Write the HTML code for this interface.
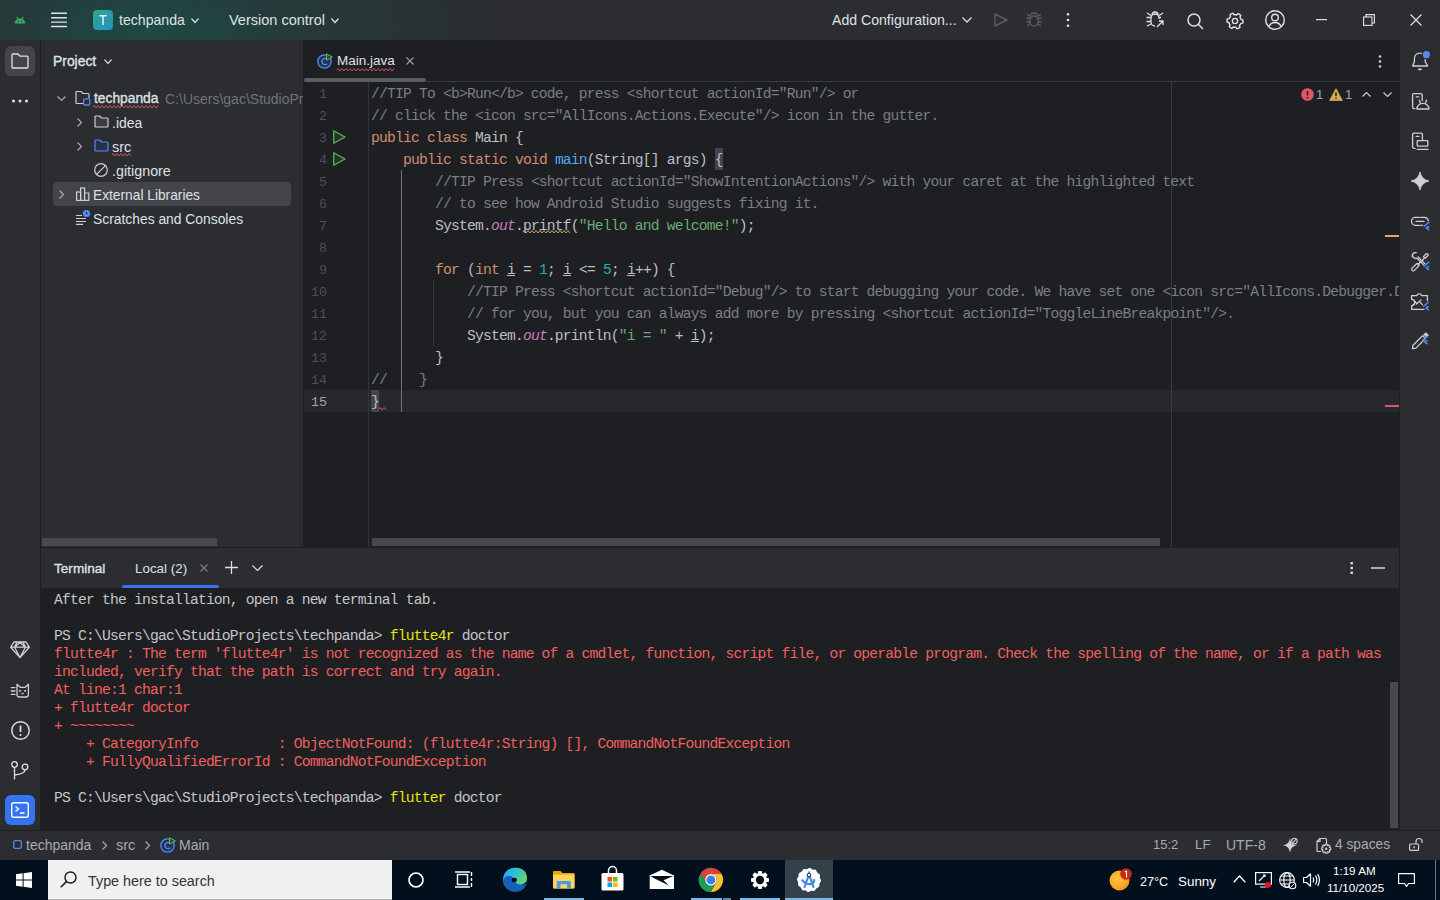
<!DOCTYPE html>
<html><head><meta charset="utf-8"><style>
*{margin:0;padding:0;box-sizing:border-box}
html,body{width:1440px;height:900px;overflow:hidden;background:#1E1F22}
body{position:relative;font-family:"Liberation Sans",sans-serif;font-size:14px;color:#DFE1E5}
.a{position:absolute}
.t{position:absolute;white-space:pre;line-height:16px}
.mono{font-family:"Liberation Mono",monospace;font-size:14.667px;letter-spacing:-0.8015px;white-space:pre}
svg.i{position:absolute;overflow:visible}
#title{left:0;top:0;width:1440px;height:40px;background:#2B2D30}
#grad{left:0;top:0;width:900px;height:40px;background:radial-gradient(ellipse 350px 160px at 150px 30px, rgba(29,74,68,1) 0%, rgba(36,62,61,0.75) 40%, rgba(43,45,48,0) 100%)}
#lstrip{left:0;top:40px;width:41px;height:790px;background:#2B2D30;border-right:1px solid #1E1F22}
#rstrip{left:1399px;top:40px;width:41px;height:790px;background:#2B2D30;border-left:1px solid #1E1F22}
#proj{left:41px;top:40px;width:262px;height:507px;background:#2B2D30}
#editor{left:303px;top:40px;width:1096px;height:507px;background:#1E1F22}
#term{left:41px;top:588px;width:1358px;height:242px;background:#1E1F22}
#termhead{left:41px;top:548px;width:1358px;height:40px;background:#2B2D30}
#status{left:0;top:830px;width:1440px;height:30px;background:#2B2D30;border-top:1px solid #1E1F22}
#taskbar{left:0;top:860px;width:1440px;height:40px;background:#02101D}
.code{position:absolute;left:371px;top:83px;line-height:22px;color:#BCBEC4}
.ln{position:absolute;left:297px;width:30px;text-align:right;top:84px;line-height:22px;color:#4B5059;font-size:13.333px!important;letter-spacing:0!important}
.c{color:#7A7E85}.k{color:#CF8E6D}.f{color:#56A8F5}.s{color:#6AAB73}.n{color:#2AACB8}.o{color:#C77DBB;font-style:italic}
.term{position:absolute;left:54px;top:591px;line-height:18px;color:#C4C6CA}
.r{color:#F0605E}.y{color:#E5E510}
</style></head><body>
<div id="title" class="a"></div>
<div id="grad" class="a"></div>
<div id="lstrip" class="a"></div>
<div id="rstrip" class="a"></div>
<div id="proj" class="a"></div>
<div id="editor" class="a"></div>
<div id="termhead" class="a"></div>
<div id="term" class="a"></div>
<div id="status" class="a"></div>
<div id="taskbar" class="a"></div>
<svg class="i" style="left:14px;top:16px" width="12" height="8" viewBox="0 0 12 8"><path d="M0.8 7.5 A5.2 5.2 0 0 1 11.2 7.5 Z" fill="#3DAA5C"/><path d="M2.8 0.8 L4.2 3.2 M9.2 0.8 L7.8 3.2" stroke="#3DAA5C" stroke-width="1.1"/><circle cx="4.2" cy="5.3" r="0.75" fill="#1f3a37"/><circle cx="7.8" cy="5.3" r="0.75" fill="#1f3a37"/></svg>
<svg class="i" style="left:51px;top:12px" width="16" height="16" viewBox="0 0 16 16"><rect x="0" y="0.6" width="16" height="1.4" rx="0.5" fill="#DFE1E5"/><rect x="0" y="5.0" width="16" height="1.4" rx="0.5" fill="#DFE1E5"/><rect x="0" y="9.4" width="16" height="1.4" rx="0.5" fill="#DFE1E5"/><rect x="0" y="13.8" width="16" height="1.4" rx="0.5" fill="#DFE1E5"/></svg>
<div class="a" style="left:93px;top:10px;width:20px;height:20px;border-radius:4px;background:linear-gradient(135deg,#2FA58A,#2094C4)"></div>
<svg class="i" style="left:93px;top:10px" width="20" height="20" viewBox="0 0 20 20"><path d="M6.2 5.8 H13.8 M10 5.8 V15" stroke="#E6F2F2" stroke-width="1.5" fill="none"/></svg>
<div class="t" style="left:119px;top:12px;font-size:14.1px;color:#DFE1E5;font-weight:normal;">techpanda</div>
<svg class="i" style="left:191px;top:18px" width="8" height="5" viewBox="0 0 8 5"><path d="M0.5 0.5 L4.0 4.5 L7.5 0.5" stroke="#DFE1E5" stroke-width="1.2" fill="none"/></svg>
<div class="t" style="left:229px;top:12px;font-size:14.5px;color:#DFE1E5;font-weight:normal;">Version control</div>
<svg class="i" style="left:331px;top:18px" width="8" height="5" viewBox="0 0 8 5"><path d="M0.5 0.5 L4.0 4.5 L7.5 0.5" stroke="#DFE1E5" stroke-width="1.2" fill="none"/></svg>
<div class="t" style="left:832px;top:12px;font-size:14.1px;color:#DFE1E5;font-weight:normal;">Add Configuration...</div>
<svg class="i" style="left:962px;top:17px" width="10" height="6" viewBox="0 0 10 6"><path d="M0.5 0.5 L5 5 L9.5 0.5" stroke="#DFE1E5" stroke-width="1.3" fill="none"/></svg>
<svg class="i" style="left:994px;top:13px" width="14" height="14" viewBox="0 0 14 14"><path d="M1 1 L13 7 L1 13 Z" stroke="#5B5E64" stroke-width="1.4" fill="none" stroke-linejoin="round"/></svg>
<svg class="i" style="left:1026px;top:12px" width="16" height="15" viewBox="0 0 16 15"><g stroke="#5B5E64" stroke-width="1.3" fill="none"><path d="M4.5 4 Q4.5 1 8 1 Q11.5 1 11.5 4"/><rect x="4" y="4" width="8" height="10" rx="4"/><path d="M0.5 6 H4 M12 6 H15.5 M0.5 10 H4 M12 10 H15.5 M1 14 L4 12 M15 14 L12 12 M1 2 L4 4.5 M15 2 L12 4.5"/></g></svg>
<svg class="i" style="left:1066px;top:13px" width="4" height="14" viewBox="0 0 4 14"><circle cx="2" cy="1.3" r="1.3" fill="#DFE1E5"/><circle cx="2" cy="7" r="1.3" fill="#DFE1E5"/><circle cx="2" cy="12.7" r="1.3" fill="#DFE1E5"/></svg>
<svg class="i" style="left:1146px;top:11px" width="19" height="17" viewBox="0 0 19 17"><g stroke="#DFE1E5" stroke-width="1.3" fill="none"><path d="M6 4 Q6 1 9 1 Q12 1 12 4"/><path d="M13 8 V7 A4 4 0 0 0 5 7 V11 A4 4 0 0 0 9 15"/><path d="M0.5 6.5 H5 M0.5 10.5 H5 M1 15 L5 13 M1 2 L5 4.5 M13 4.5 L17 2 M13 6.5 H15"/><path d="M11 16 L17 10 M13 10 H17 V14"/></g></svg>
<svg class="i" style="left:1187px;top:13px" width="17" height="16" viewBox="0 0 17 16"><g stroke="#DFE1E5" stroke-width="1.5" fill="none"><circle cx="7" cy="7" r="6"/><path d="M11.3 11.3 L16 16"/></g></svg>
<svg class="i" style="left:1226px;top:12px" width="18" height="18" viewBox="0 0 18 18"><g stroke="#DFE1E5" stroke-width="1.4" fill="none"><circle cx="9" cy="9" r="2.6"/><path d="M17.00 9.00 L16.93 10.04 L16.73 11.07 L14.82 11.41 L14.46 12.15 L14.00 12.84 L13.45 13.45 L13.87 15.35 L13.00 15.93 L12.06 16.39 L11.07 16.73 L9.82 15.25 L9.00 15.30 L8.18 15.25 L7.37 15.09 L5.94 16.39 L5.00 15.93 L4.13 15.35 L3.34 14.66 L4.00 12.84 L3.54 12.15 L3.18 11.41 L2.91 10.63 L1.07 10.04 L1.00 9.00 L1.07 7.96 L1.27 6.93 L3.18 6.59 L3.54 5.85 L4.00 5.16 L4.55 4.55 L4.13 2.65 L5.00 2.07 L5.94 1.61 L6.93 1.27 L8.18 2.75 L9.00 2.70 L9.82 2.75 L10.63 2.91 L12.06 1.61 L13.00 2.07 L13.87 2.65 L14.66 3.34 L14.00 5.16 L14.46 5.85 L14.82 6.59 L15.09 7.37 L16.93 7.96 Z"/></g></svg>
<svg class="i" style="left:1265px;top:10px" width="20" height="20" viewBox="0 0 20 20"><g stroke="#DFE1E5" stroke-width="1.4" fill="none"><circle cx="10" cy="10" r="9.3"/><circle cx="10" cy="7.5" r="3.3"/><path d="M4 16.5 Q5.5 12.5 10 12.5 Q14.5 12.5 16 16.5"/></g></svg>
<svg class="i" style="left:1316px;top:19px" width="11" height="2" viewBox="0 0 11 2"><rect x="0" y="0" width="11" height="1.2" fill="#DFE1E5"/></svg>
<svg class="i" style="left:1363px;top:14px" width="12" height="12" viewBox="0 0 12 12"><g stroke="#DFE1E5" stroke-width="1.1" fill="none"><rect x="0.6" y="3" width="8.4" height="8.4"/><path d="M3 3 V0.6 H11.4 V9 H9"/></g></svg>
<svg class="i" style="left:1410px;top:14px" width="12" height="12" viewBox="0 0 12 12"><path d="M0.5 0.5 L11.5 11.5 M11.5 0.5 L0.5 11.5" stroke="#DFE1E5" stroke-width="1.2"/></svg>
<div class="a" style="left:5px;top:46px;width:30px;height:30px;border-radius:6px;background:#43454A"></div>
<svg class="i" style="left:11px;top:53px" width="18" height="16" viewBox="0 0 18 16"><path d="M1 2 Q1 1 2 1 H7 L9 3.2 H16 Q17 3.2 17 4.2 V14 Q17 15 16 15 H2 Q1 15 1 14 Z" stroke="#DFE1E5" stroke-width="1.3" fill="none" stroke-linejoin="round"/></svg>
<svg class="i" style="left:12px;top:99px" width="16" height="4" viewBox="0 0 16 4"><circle cx="1.5" cy="2" r="1.5" fill="#DFE1E5"/><circle cx="8" cy="2" r="1.5" fill="#DFE1E5"/><circle cx="14.5" cy="2" r="1.5" fill="#DFE1E5"/></svg>
<svg class="i" style="left:0px;top:630px" width="40" height="80" viewBox="0 630 40 80"><g stroke="#CED0D6" stroke-width="1.3" fill="none" stroke-linejoin="round" stroke-linecap="round"><path d="M14 642 H26 L29.3 647.2 L20 657.6 L10.7 647.2 Z M10.7 647.2 H29.3 M14.6 647.2 L17 642 M25.4 647.2 L23 642 M14.6 647.2 L20 642.3 L25.4 647.2 M14.6 647.2 L20 657.6 L25.4 647.2"/></g><g stroke="#CED0D6" stroke-width="1.3" fill="none" stroke-linejoin="round" stroke-linecap="round"><path d="M17 684.3 L20.3 687.3 H25.2 L28.4 684.3 V694.5 Q28.4 697 26 697 H19.4 Q17 697 17 694.5 Z"/><path d="M11.3 687.6 H15 M11.3 691 H15 M11.3 694.4 H15"/></g><rect x="19.1" y="690" width="1.7" height="1.7" fill="#CED0D6"/><rect x="24.3" y="690" width="1.7" height="1.7" fill="#CED0D6"/><path d="M21.6 693.2 H23.6 L22.6 694.4 Z" fill="#CED0D6" stroke="#CED0D6" stroke-width="0.6"/></svg>
<svg class="i" style="left:11px;top:721px" width="19" height="19" viewBox="0 0 19 19"><circle cx="9.5" cy="9.5" r="8.7" stroke="#DFE1E5" stroke-width="1.4" fill="none"/><path d="M9.5 4.5 V11" stroke="#DFE1E5" stroke-width="1.7"/><circle cx="9.5" cy="14" r="1" fill="#DFE1E5"/></svg>
<svg class="i" style="left:11px;top:761px" width="18" height="19" viewBox="0 0 18 19"><g stroke="#DFE1E5" stroke-width="1.3" fill="none"><circle cx="3.5" cy="3.5" r="2.8"/><circle cx="14" cy="6" r="2.8"/><path d="M3.5 6.3 V18.5 M14 8.8 Q14 13 3.5 14"/></g></svg>
<div class="a" style="left:5px;top:795px;width:30px;height:30px;border-radius:6px;background:#3574F0"></div>
<svg class="i" style="left:11px;top:802px" width="18" height="16" viewBox="0 0 18 16"><rect x="0.7" y="0.7" width="16.6" height="14.6" rx="2" stroke="#FFFFFF" stroke-width="1.4" fill="none"/><path d="M4.5 4.5 L7.5 7 L4.5 9.5 M9 11 H13.5" stroke="#FFFFFF" stroke-width="1.4" fill="none"/></svg>
<div class="t" style="left:53px;top:53px;font-size:13.9px;color:#DFE1E5;font-weight:normal;-webkit-text-stroke:0.35px #DFE1E5;">Project</div>
<svg class="i" style="left:104px;top:59px" width="8" height="5" viewBox="0 0 8 5"><path d="M0.5 0.5 L4.0 4.5 L7.5 0.5" stroke="#CED0D6" stroke-width="1.2" fill="none"/></svg>
<svg class="i" style="left:57px;top:96px" width="9" height="5" viewBox="0 0 9 5"><path d="M0.5 0.5 L4.5 4.5 L8.5 0.5" stroke="#A8ABB0" stroke-width="1.2" fill="none"/></svg>
<svg class="i" style="left:75px;top:90px" width="16" height="16" viewBox="0 0 16 16"><path d="M8 13.5 H2 Q1 13.5 1 12.5 V2.5 Q1 1.5 2 1.5 H6 L8 3.5 H13 Q14 3.5 14 4.5 V8" stroke="#CED0D6" stroke-width="1.2" fill="none" stroke-linejoin="round"/><rect x="8.6" y="8.8" width="6.2" height="6.2" rx="1.3" stroke="#548AF7" stroke-width="1.3" fill="#2B2D30"/></svg>
<div class="t" style="left:94px;top:91px;font-size:13.8px;color:#DFE1E5;font-weight:normal;-webkit-text-stroke:0.35px #DFE1E5;">techpanda</div>
<svg class="i" style="left:93px;top:105px" width="66" height="4"><path d="M0 2 L1 0.5 L3 3 L5 0.5 L7 3 L9 0.5 L11 3 L13 0.5 L15 3 L17 0.5 L19 3 L21 0.5 L23 3 L25 0.5 L27 3 L29 0.5 L31 3 L33 0.5 L35 3 L37 0.5 L39 3 L41 0.5 L43 3 L45 0.5 L47 3 L49 0.5 L51 3 L53 0.5 L55 3 L57 0.5 L59 3 L61 0.5 L63 3 L65 0.5" stroke="#D65D62" stroke-width="0.9" fill="none"/></svg>
<div class="t" style="left:165px;top:91px;width:138px;overflow:hidden;font-size:14px;color:#6F737A">C:\Users\gac\StudioProjects\techpanda</div>
<svg class="i" style="left:77px;top:118px" width="5" height="9" viewBox="0 0 5 9"><path d="M0.5 0.5 L4.5 4.5 L0.5 8.5" stroke="#A8ABB0" stroke-width="1.2" fill="none"/></svg>
<svg class="i" style="left:94px;top:115px" width="15" height="13" viewBox="0 0 15 13"><path d="M1 2 Q1 1 2 1 H5.5 L7.5 3 H13 Q14 3 14 4 V11 Q14 12 13 12 H2 Q1 12 1 11 Z" stroke="#CED0D6" stroke-width="1.2" fill="#3B3D41" stroke-linejoin="round"/></svg>
<div class="t" style="left:112px;top:115px;font-size:14px;color:#DFE1E5;font-weight:normal;">.idea</div>
<svg class="i" style="left:77px;top:142px" width="5" height="9" viewBox="0 0 5 9"><path d="M0.5 0.5 L4.5 4.5 L0.5 8.5" stroke="#A8ABB0" stroke-width="1.2" fill="none"/></svg>
<svg class="i" style="left:94px;top:139px" width="15" height="13" viewBox="0 0 15 13"><path d="M1 2 Q1 1 2 1 H5.5 L7.5 3 H13 Q14 3 14 4 V11 Q14 12 13 12 H2 Q1 12 1 11 Z" stroke="#548AF7" stroke-width="1.2" fill="#25324D" stroke-linejoin="round"/></svg>
<div class="t" style="left:112px;top:139px;font-size:14.5px;color:#DFE1E5;font-weight:normal;">src</div>
<svg class="i" style="left:112px;top:153px" width="20" height="4"><path d="M0 2 L1 0.5 L3 3 L5 0.5 L7 3 L9 0.5 L11 3 L13 0.5 L15 3 L17 0.5 L19 3" stroke="#D65D62" stroke-width="0.9" fill="none"/></svg>
<svg class="i" style="left:94px;top:163px" width="14" height="14" viewBox="0 0 14 14"><circle cx="7" cy="7" r="6.3" stroke="#CED0D6" stroke-width="1.2" fill="none"/><path d="M2.8 11.2 L11.2 2.8" stroke="#CED0D6" stroke-width="1.2"/></svg>
<div class="t" style="left:112px;top:163px;font-size:14.3px;color:#DFE1E5;font-weight:normal;">.gitignore</div>
<div class="a" style="left:53px;top:182px;width:238px;height:24px;border-radius:4px;background:#43454A"></div>
<svg class="i" style="left:59px;top:190px" width="5" height="9" viewBox="0 0 5 9"><path d="M0.5 0.5 L4.5 4.5 L0.5 8.5" stroke="#A8ABB0" stroke-width="1.2" fill="none"/></svg>
<svg class="i" style="left:76px;top:187px" width="14" height="14" viewBox="0 0 14 14"><g stroke="#CED0D6" stroke-width="1.2" fill="none"><rect x="0.6" y="5" width="4" height="8.4"/><rect x="4.6" y="1" width="4" height="12.4"/><path d="M8.6 6 H12.8 V13.4 H8.6"/></g></svg>
<div class="t" style="left:93px;top:187.5px;font-size:13.75px;color:#DFE1E5;font-weight:normal;">External Libraries</div>
<svg class="i" style="left:76px;top:211px" width="16" height="14" viewBox="0 0 16 14"><g stroke="#CED0D6" stroke-width="1.2"><path d="M0 4.5 H6 M0 7.5 H10 M0 10.5 H10 M0 13.4 H7"/></g><circle cx="10.5" cy="2.5" r="3.6" fill="#548AF7"/><path d="M10.5 0.8 V2.7 H11.9" stroke="#2B2D30" stroke-width="0.9" fill="none"/></svg>
<div class="t" style="left:93px;top:210.5px;font-size:13.85px;color:#DFE1E5;font-weight:normal;">Scratches and Consoles</div>
<div class="a" style="left:42px;top:538px;width:175px;height:8px;background:#48494C"></div>
<svg class="i" style="left:317px;top:53px" width="16" height="16" viewBox="0 0 16 16"><circle cx="7.5" cy="8.5" r="6.7" stroke="#548AF7" stroke-width="1.3" fill="#25324D"/><path d="M10 6.3 A3 3 0 1 0 10 10.7" stroke="#548AF7" stroke-width="1.3" fill="none"/><path d="M9.5 0.8 L15.3 4 L9.5 7.2 Z" fill="#2B4A2F" stroke="#5FB865" stroke-width="1"/></svg>
<div class="t" style="left:337px;top:53px;font-size:13.5px;color:#DFE1E5;font-weight:normal;">Main.java</div>
<svg class="i" style="left:337px;top:68px" width="58" height="4"><path d="M0 2 L1 0.5 L3 3 L5 0.5 L7 3 L9 0.5 L11 3 L13 0.5 L15 3 L17 0.5 L19 3 L21 0.5 L23 3 L25 0.5 L27 3 L29 0.5 L31 3 L33 0.5 L35 3 L37 0.5 L39 3 L41 0.5 L43 3 L45 0.5 L47 3 L49 0.5 L51 3 L53 0.5 L55 3 L57 0.5" stroke="#D65D62" stroke-width="0.9" fill="none"/></svg>
<svg class="i" style="left:406px;top:57px" width="8" height="8" viewBox="0 0 8 8"><path d="M0.5 0.5 L7.5 7.5 M7.5 0.5 L0.5 7.5" stroke="#9DA0A8" stroke-width="1.1"/></svg>
<div class="a" style="left:304px;top:81px;width:1095px;height:1px;background:#393B40"></div>
<div class="a" style="left:304px;top:78px;width:122px;height:4px;border-radius:2px;background:#5A5D63"></div>
<svg class="i" style="left:1378px;top:55px" width="4" height="13" viewBox="0 0 4 13"><circle cx="2" cy="1.5" r="1.3" fill="#CED0D6"/><circle cx="2" cy="6.5" r="1.3" fill="#CED0D6"/><circle cx="2" cy="11.5" r="1.3" fill="#CED0D6"/></svg>
<div class="a" style="left:304px;top:390px;width:1095px;height:22px;background:#26282E"></div>
<div class="a" style="left:368px;top:82px;width:1px;height:465px;background:#313438"></div>
<div class="a" style="left:1171px;top:82px;width:1px;height:465px;background:#393B40"></div>
<div class="a" style="left:401px;top:170px;width:1px;height:242px;background:#6F737A"></div>
<div class="a" style="left:433px;top:280px;width:1px;height:66px;background:#393B40"></div>
<div class="a" style="left:715px;top:148px;width:8px;height:22px;background:#43454A"></div>
<div class="a" style="left:371px;top:390px;width:8px;height:22px;background:#43454A"></div>
<div class="ln mono"><span style="color:#4B5059">1</span>
<span style="color:#4B5059">2</span>
<span style="color:#4B5059">3</span>
<span style="color:#4B5059">4</span>
<span style="color:#4B5059">5</span>
<span style="color:#4B5059">6</span>
<span style="color:#4B5059">7</span>
<span style="color:#4B5059">8</span>
<span style="color:#4B5059">9</span>
<span style="color:#4B5059">10</span>
<span style="color:#4B5059">11</span>
<span style="color:#4B5059">12</span>
<span style="color:#4B5059">13</span>
<span style="color:#4B5059">14</span>
<span style="color:#A1A3AB">15</span></div>
<svg class="i" style="left:333px;top:130px" width="13" height="14" viewBox="0 0 13 14"><path d="M0.7 0.8 L12 7 L0.7 13.2 Z" fill="#253627" stroke="#5FB865" stroke-width="1.2" stroke-linejoin="round"/></svg>
<svg class="i" style="left:333px;top:152px" width="13" height="14" viewBox="0 0 13 14"><path d="M0.7 0.8 L12 7 L0.7 13.2 Z" fill="#253627" stroke="#5FB865" stroke-width="1.2" stroke-linejoin="round"/></svg>
<div class="a" style="left:371px;top:82px;width:1028px;height:465px;overflow:hidden"><div class="code mono" style="left:0;top:1px"><span class="c">//TIP To &lt;b&gt;Run&lt;/b&gt; code, press &lt;shortcut actionId=&quot;Run&quot;/&gt; or</span>
<span class="c">// click the &lt;icon src=&quot;AllIcons.Actions.Execute&quot;/&gt; icon in the gutter.</span>
<span class="k">public class</span> Main {
    <span class="k">public static void</span> <span class="f">main</span>(String[] args) {
        <span class="c">//TIP Press &lt;shortcut actionId=&quot;ShowIntentionActions&quot;/&gt; with your caret at the highlighted text</span>
        <span class="c">// to see how Android Studio suggests fixing it.</span>
        System.<span class="o">out</span>.printf(<span class="s">&quot;Hello and welcome!&quot;</span>);

        <span class="k">for</span> (<span class="k">int</span> <u>i</u> = <span class="n">1</span>; <u>i</u> &lt;= <span class="n">5</span>; <u>i</u>++) {
            <span class="c">//TIP Press &lt;shortcut actionId=&quot;Debug&quot;/&gt; to start debugging your code. We have set one &lt;icon src=&quot;AllIcons.Debugger.Db_set_breakpoint&quot;/&gt; breakpoint</span>
            <span class="c">// for you, but you can always add more by pressing &lt;shortcut actionId=&quot;ToggleLineBreakpoint&quot;/&gt;.</span>
            System.<span class="o">out</span>.println(<span class="s">&quot;i = &quot;</span> + <u>i</u>);
        }
<span class="c">//    }</span>
}</div></div>
<svg class="i" style="left:523px;top:230px" width="48" height="4"><path d="M0 2 L1 0.5 L3 3 L5 0.5 L7 3 L9 0.5 L11 3 L13 0.5 L15 3 L17 0.5 L19 3 L21 0.5 L23 3 L25 0.5 L27 3 L29 0.5 L31 3 L33 0.5 L35 3 L37 0.5 L39 3 L41 0.5 L43 3 L45 0.5 L47 3" stroke="#D5B778" stroke-width="0.9" fill="none"/></svg>
<svg class="i" style="left:379px;top:407px" width="8" height="4"><path d="M0 2 L1 0.5 L3 3 L5 0.5 L7 3" stroke="#F75464" stroke-width="0.9" fill="none"/></svg>
<svg class="i" style="left:1301px;top:88px" width="13" height="13" viewBox="0 0 13 13"><circle cx="6.5" cy="6.5" r="6.3" fill="#E05665"/><path d="M6.5 3 V7.5" stroke="#1E1F22" stroke-width="1.6"/><circle cx="6.5" cy="9.8" r="0.9" fill="#1E1F22"/></svg>
<div class="t" style="left:1316px;top:87px;font-size:13px;color:#A1A3AB;font-weight:normal;">1</div>
<svg class="i" style="left:1329px;top:88px" width="14" height="13" viewBox="0 0 14 13"><path d="M7 0.8 L13.4 12.4 H0.6 Z" fill="#D6AE58" stroke="#D6AE58" stroke-width="0.8" stroke-linejoin="round"/><path d="M7 4.3 V8.3" stroke="#1E1F22" stroke-width="1.5"/><circle cx="7" cy="10.3" r="0.8" fill="#1E1F22"/></svg>
<div class="t" style="left:1345px;top:87px;font-size:13px;color:#A1A3AB;font-weight:normal;">1</div>
<svg class="i" style="left:1362px;top:92px" width="9" height="5" viewBox="0 0 9 5"><path d="M0.5 4.5 L4.5 0.5 L8.5 4.5" stroke="#CED0D6" stroke-width="1.2" fill="none"/></svg>
<svg class="i" style="left:1383px;top:92px" width="9" height="5" viewBox="0 0 9 5"><path d="M0.5 0.5 L4.5 4.5 L8.5 0.5" stroke="#CED0D6" stroke-width="1.2" fill="none"/></svg>
<div class="a" style="left:1385px;top:235px;width:14px;height:2px;background:#D6AE58"></div>
<div class="a" style="left:1385px;top:405px;width:14px;height:2px;background:#DB5C5C"></div>
<div class="a" style="left:372px;top:538px;width:788px;height:8px;background:#474849"></div>
<div class="a" style="left:41px;top:547px;width:1358px;height:1px;background:#1E1F22"></div>
<svg class="i" style="left:1400px;top:40px" width="40" height="80" viewBox="1400 40 40 80"><path d="M1412.6 66 H1427.6 L1425.2 61.8 V58.4 A5.4 5.4 0 0 0 1414.4 58.4 V61.8 Z" stroke="#CED0D6" stroke-width="1.3" fill="none" stroke-linejoin="round" stroke-linecap="round"/><path d="M1417.9 68.6 H1421.9 A2 2 0 0 1 1417.9 68.6 Z" fill="#CED0D6"/><circle cx="1426.4" cy="54.7" r="4.6" fill="#2B2D30"/><circle cx="1426.4" cy="54.7" r="3.6" fill="#548AF7"/></svg>
<svg class="i" style="left:1400px;top:80px" width="40" height="40" viewBox="1400 80 40 40"><path d="M1415 108.6 H1414 Q1412.6 108.6 1412.6 107.2 V95 Q1412.6 93.6 1414 93.6 H1420.8 Q1422.2 93.6 1422.2 95 V100.5" stroke="#CED0D6" stroke-width="1.3" fill="none" stroke-linejoin="round" stroke-linecap="round"/><path d="M1416.2 96.8 H1418.8" stroke="#CED0D6" stroke-width="1.3" fill="none" stroke-linejoin="round" stroke-linecap="round"/><path d="M1416.9 109 A6 5.6 0 0 1 1428.9 109 Z" stroke="#CED0D6" stroke-width="1.3" fill="none" stroke-linejoin="round" stroke-linecap="round"/><path d="M1420.3 103.2 L1419.4 100.2 M1425.5 103.2 L1426.4 100.2" stroke="#CED0D6" stroke-width="1.3" fill="none" stroke-linejoin="round" stroke-linecap="round"/></svg>
<svg class="i" style="left:1400px;top:120px" width="40" height="40" viewBox="1400 120 40 40"><path d="M1415 148.4 H1414 Q1412.6 148.4 1412.6 147 V134.6 Q1412.6 133.2 1414 133.2 H1421 Q1422.4 133.2 1422.4 134.6 V140.3" stroke="#CED0D6" stroke-width="1.3" fill="none" stroke-linejoin="round" stroke-linecap="round"/><path d="M1416.2 136.4 H1418.8" stroke="#CED0D6" stroke-width="1.3" fill="none" stroke-linejoin="round" stroke-linecap="round"/><rect x="1417.2" y="140.6" width="10.6" height="5.6" rx="0.6" stroke="#CED0D6" stroke-width="1.3" fill="none" stroke-linejoin="round" stroke-linecap="round"/><path d="M1417.3 149.4 H1428" stroke="#CED0D6" stroke-width="1.3" fill="none" stroke-linejoin="round" stroke-linecap="round"/></svg>
<svg class="i" style="left:1411px;top:172px" width="18" height="18" viewBox="0 0 18 18"><path d="M9 0 Q10.5 7.5 18 9 Q10.5 10.5 9 18 Q7.5 10.5 0 9 Q7.5 7.5 9 0 Z" fill="#CED0D6" stroke="#CED0D6" stroke-width="0.8" stroke-linejoin="round"/></svg>
<svg class="i" style="left:1400px;top:200px" width="40" height="160" viewBox="1400 200 40 160"><path d="M1419.5 217.3 H1415.5 A4 4 0 0 0 1415.5 225.3 H1419.5 M1420.8 217.3 H1424.5 A4 4 0 0 1 1428.3 220.5 M1420.8 225.3 H1422.5" stroke="#CED0D6" stroke-width="1.3" fill="none" stroke-linecap="round" stroke-linejoin="round"/><path d="M1416 221.4 H1424" stroke="#CED0D6" stroke-width="1.3" fill="none" stroke-linecap="round" stroke-linejoin="round"/><path d="M1424.2 226.29999999999998 L1428.8 222.2" stroke="#548AF7" stroke-width="1.5" fill="none" stroke-linecap="round" stroke-linejoin="round"/><path d="M1428.8 226.5 L1426.3 227.79999999999998 L1428.8 229.7" stroke="#548AF7" stroke-width="1.5" fill="none" stroke-linecap="round" stroke-linejoin="round"/><path d="M1411.9 268.4 L1416.6 263.7 A1.6 1.6 0 0 1 1418.8 265.9 L1414.1 270.6 A1.6 1.6 0 0 1 1411.9 268.4 Z" stroke="#CED0D6" stroke-width="1.3" fill="none" stroke-linecap="round" stroke-linejoin="round"/><path d="M1417.8 264.8 L1423.9 258.7" stroke="#CED0D6" stroke-width="1.3" fill="none" stroke-linecap="round" stroke-linejoin="round"/><path d="M1423.4 256.6 L1426 254 A1.2 1.2 0 0 1 1427.7 255.7 L1425.1 258.3 Z" stroke="#CED0D6" stroke-width="1.3" fill="none" stroke-linecap="round" stroke-linejoin="round"/><path d="M1413.2 253.3 A3.2 3.2 0 0 0 1416.9 258.2 L1423.6 264.9 M1412.3 256.5 A3.2 3.2 0 0 1 1416.2 252.7 M1418.2 257 L1424.8 263.6" stroke="#CED0D6" stroke-width="1.3" fill="none" stroke-linecap="round" stroke-linejoin="round"/><path d="M1424.1000000000001 266.20000000000005 L1428.7 262.1" stroke="#548AF7" stroke-width="1.5" fill="none" stroke-linecap="round" stroke-linejoin="round"/><path d="M1428.7 266.40000000000003 L1426.2 267.70000000000005 L1428.7 269.6" stroke="#548AF7" stroke-width="1.5" fill="none" stroke-linecap="round" stroke-linejoin="round"/><path d="M1424 309.4 H1411.6 V305.6 A2.6 2.6 0 0 0 1411.6 299.4 V295.6 H1416.8 A2.5 2.5 0 0 1 1421.6 295.6 H1427.4 V300.6" stroke="#CED0D6" stroke-width="1.3" fill="none" stroke-linecap="round" stroke-linejoin="round"/><path d="M1416.6 304.2 L1421 299.8 M1415.3 301.5 A1.8 1.8 0 0 0 1417.8 303 M1419.3 301.3 L1422.4 304.6" stroke="#CED0D6" stroke-width="1.2" fill="none" stroke-linecap="round"/><path d="M1423.7 306.3 L1428.3 302.2" stroke="#548AF7" stroke-width="1.5" fill="none" stroke-linecap="round" stroke-linejoin="round"/><path d="M1428.3 306.5 L1425.8 307.8 L1428.3 309.7" stroke="#548AF7" stroke-width="1.5" fill="none" stroke-linecap="round" stroke-linejoin="round"/><path d="M1412.4 348.6 L1413 345.2 L1422.6 335.6 L1425.5 338.5 L1415.9 348.1 Z" stroke="#CED0D6" stroke-width="1.3" fill="none" stroke-linecap="round" stroke-linejoin="round"/><path d="M1423.8 334.4 L1424.8 333.4 A1.4 1.4 0 0 1 1426.8 333.4 L1427.7 334.3 A1.4 1.4 0 0 1 1427.7 336.3 L1426.7 337.3 Z" fill="#CED0D6" stroke="#CED0D6" stroke-width="1" stroke-linejoin="round"/><path d="M1422.6000000000001 340.40000000000003 L1427.2 336.3" stroke="#548AF7" stroke-width="1.5" fill="none" stroke-linecap="round" stroke-linejoin="round"/><path d="M1427.2 340.6 L1424.7 341.90000000000003 L1427.2 343.8" stroke="#548AF7" stroke-width="1.5" fill="none" stroke-linecap="round" stroke-linejoin="round"/></svg>
<div class="t" style="left:54px;top:561px;font-size:13.6px;color:#DFE1E5;font-weight:normal;-webkit-text-stroke:0.35px #DFE1E5;">Terminal</div>
<div class="t" style="left:135px;top:561px;font-size:13.4px;color:#DFE1E5;font-weight:normal;">Local (2)</div>
<svg class="i" style="left:200px;top:564px" width="8" height="8" viewBox="0 0 8 8"><path d="M0.5 0.5 L7.5 7.5 M7.5 0.5 L0.5 7.5" stroke="#7E8187" stroke-width="1.1"/></svg>
<svg class="i" style="left:225px;top:561px" width="13" height="13" viewBox="0 0 13 13"><path d="M6.5 0 V13 M0 6.5 H13" stroke="#DFE1E5" stroke-width="1.3"/></svg>
<svg class="i" style="left:252px;top:565px" width="11" height="6" viewBox="0 0 11 6"><path d="M0.5 0.5 L5.5 5.5 L10.5 0.5" stroke="#DFE1E5" stroke-width="1.2" fill="none"/></svg>
<div class="a" style="left:122px;top:585px;width:97px;height:3px;border-radius:1.5px;background:#3574F0"></div>
<svg class="i" style="left:1350px;top:562px" width="4" height="13" viewBox="0 0 4 13"><rect x="0.5" y="0" width="2.4" height="2.4" fill="#DFE1E5"/><rect x="0.5" y="4.8" width="2.4" height="2.4" fill="#DFE1E5"/><rect x="0.5" y="9.6" width="2.4" height="2.4" fill="#DFE1E5"/></svg>
<div class="a" style="left:1371px;top:567px;width:14px;height:2px;background:#A8ABB0"></div>
<div class="term mono">After the installation, open a new terminal tab.

PS C:&#92;Users&#92;gac&#92;StudioProjects&#92;techpanda&gt; <span class="y">flutte4r</span> doctor
<span class="r">flutte4r : The term &#x27;flutte4r&#x27; is not recognized as the name of a cmdlet, function, script file, or operable program. Check the spelling of the name, or if a path was</span>
<span class="r">included, verify that the path is correct and try again.</span>
<span class="r">At line:1 char:1</span>
<span class="r">+ flutte4r doctor</span>
<span class="r">+ ~~~~~~~~</span>
<span class="r">    + CategoryInfo          : ObjectNotFound: (flutte4r:String) [], CommandNotFoundException</span>
<span class="r">    + FullyQualifiedErrorId : CommandNotFoundException</span>

PS C:&#92;Users&#92;gac&#92;StudioProjects&#92;techpanda&gt; <span class="y">flutter</span> doctor</div>
<div class="a" style="left:1390px;top:682px;width:8px;height:146px;background:#48494B"></div>
<svg class="i" style="left:13px;top:840px" width="9" height="9" viewBox="0 0 9 9"><rect x="0.7" y="0.7" width="7.6" height="7.6" rx="1.5" stroke="#548AF7" stroke-width="1.3" fill="none"/></svg>
<div class="t" style="left:26px;top:837px;font-size:14px;color:#A8ABB0;font-weight:normal;">techpanda</div>
<svg class="i" style="left:102px;top:841px" width="5" height="9" viewBox="0 0 5 9"><path d="M0.5 0.5 L4.5 4.5 L0.5 8.5" stroke="#A8ABB0" stroke-width="1.2" fill="none"/></svg>
<div class="t" style="left:116px;top:837px;font-size:14.5px;color:#A8ABB0;font-weight:normal;">src</div>
<svg class="i" style="left:145px;top:841px" width="5" height="9" viewBox="0 0 5 9"><path d="M0.5 0.5 L4.5 4.5 L0.5 8.5" stroke="#A8ABB0" stroke-width="1.2" fill="none"/></svg>
<svg class="i" style="left:160px;top:837px" width="16" height="16" viewBox="0 0 16 16"><circle cx="7.5" cy="8.5" r="6.7" stroke="#548AF7" stroke-width="1.3" fill="#25324D"/><path d="M10 6.3 A3 3 0 1 0 10 10.7" stroke="#548AF7" stroke-width="1.3" fill="none"/><path d="M9.5 0.8 L15.3 4 L9.5 7.2 Z" fill="#2B4A2F" stroke="#5FB865" stroke-width="1"/></svg>
<div class="t" style="left:179px;top:837px;font-size:14px;color:#A8ABB0;font-weight:normal;">Main</div>
<div class="t" style="left:1153px;top:837px;font-size:13px;color:#A8ABB0;font-weight:normal;">15:2</div>
<div class="t" style="left:1195px;top:837px;font-size:13.5px;color:#A8ABB0;font-weight:normal;">LF</div>
<div class="t" style="left:1226px;top:837px;font-size:14px;color:#A8ABB0;font-weight:normal;">UTF-8</div>
<svg class="i" style="left:1282px;top:838px" width="16" height="15" viewBox="0 0 16 15"><path d="M8 0.3 Q8.8 6.5 15 7.3 Q8.8 8.1 8 14.3 Q7.2 8.1 1 7.3 Q7.2 6.5 8 0.3 Z" fill="#CED0D6" transform="translate(0 0)"/><circle cx="12.4" cy="3" r="3.6" fill="#2B2D30"/><circle cx="12.4" cy="3" r="2.8" stroke="#CED0D6" stroke-width="1.1" fill="none"/><path d="M10.6 4.8 L14.2 1.2" stroke="#CED0D6" stroke-width="1.1"/></svg>
<svg class="i" style="left:1316px;top:837px" width="16" height="17" viewBox="0 0 16 17"><g stroke="#CED0D6" stroke-width="1.2" fill="none" stroke-linejoin="round"><path d="M5 14.5 H2 Q1 14.5 1 13.5 V4.5 L4 1.5 H9.5 Q10.5 1.5 10.5 2.5 V7"/><path d="M1 4.5 H4 V1.5"/></g><path d="M13.45 10.70 L14.69 10.70 L14.69 12.70 L13.45 12.70 L13.21 13.29 L14.08 14.16 L12.66 15.58 L11.79 14.71 L11.20 14.95 L11.20 16.19 L9.20 16.19 L9.20 14.95 L8.61 14.71 L7.74 15.58 L6.32 14.16 L7.19 13.29 L6.95 12.70 L5.71 12.70 L5.71 10.70 L6.95 10.70 L7.19 10.11 L6.32 9.24 L7.74 7.82 L8.61 8.69 L9.20 8.45 L9.20 7.21 L11.20 7.21 L11.20 8.45 L11.79 8.69 L12.66 7.82 L14.08 9.24 L13.21 10.11 Z" stroke="#CED0D6" stroke-width="1.1" fill="#2B2D30" stroke-linejoin="round"/><circle cx="10.2" cy="11.7" r="1.2" fill="#CED0D6"/></svg>
<div class="t" style="left:1335px;top:837px;font-size:13.75px;color:#A8ABB0;font-weight:normal;">4 spaces</div>
<svg class="i" style="left:1409px;top:838px" width="14" height="13" viewBox="0 0 14 13"><g stroke="#CED0D6" stroke-width="1.2" fill="none"><rect x="0.6" y="6" width="9" height="6.4" rx="1"/><path d="M7 6 V3.5 A3 3 0 0 1 13 3.5 V5"/></g><rect x="4.4" y="8.3" width="1.4" height="2" fill="#CED0D6"/></svg>
<svg class="i" style="left:16px;top:872px" width="16" height="16" viewBox="0 0 16 16"><path d="M0 2.3 L6.6 1.3 V7.5 H0 Z M7.6 1.2 L16 0 V7.5 H7.6 Z M0 8.5 H6.6 V14.7 L0 13.7 Z M7.6 8.5 H16 V16 L7.6 14.8 Z" fill="#FFFFFF"/></svg>
<div class="a" style="left:48px;top:860px;width:344px;height:40px;background:#F0F0F0;border-bottom:1px solid #B8B8B8"></div>
<svg class="i" style="left:60px;top:871px" width="17" height="17" viewBox="0 0 17 17"><circle cx="10.5" cy="6.5" r="5.5" stroke="#1A1A1A" stroke-width="1.4" fill="none"/><path d="M6.6 10.4 L0.8 16.2" stroke="#1A1A1A" stroke-width="1.5"/></svg>
<div class="t" style="left:88px;top:873px;font-size:14.35px;color:#333333;font-weight:normal;">Type here to search</div>
<svg class="i" style="left:408px;top:872px" width="16" height="16" viewBox="0 0 16 16"><circle cx="8" cy="8" r="7" stroke="#FFFFFF" stroke-width="1.7" fill="none"/></svg>
<svg class="i" style="left:455px;top:871px" width="18" height="17" viewBox="0 0 18 17"><g stroke="#FFFFFF" stroke-width="1.4" fill="none"><rect x="2.5" y="3.5" width="10" height="10"/><path d="M0 1 H15 M0 16 H15 M16.5 1 V5 M16.5 7 V10 M16.5 12 V16"/></g></svg>
<svg class="i" style="left:495px;top:862px" width="90" height="36" viewBox="495 862 90 36"><defs><linearGradient id="eg" x1="0" y1="0" x2="0.3" y2="1"><stop offset="0" stop-color="#3BC4EE"/><stop offset="1" stop-color="#0F62C2"/></linearGradient><linearGradient id="eg2" x1="0" y1="0" x2="1" y2="0.5"><stop offset="0" stop-color="#2E9FE6"/><stop offset="0.45" stop-color="#2CB9DF"/><stop offset="1" stop-color="#62D86A"/></linearGradient></defs><circle cx="515" cy="879.7" r="12" fill="url(#eg)"/><path d="M507 871 Q513 866.5 520 868.3 Q526.5 870.5 527 877.5 Q527.2 882.5 522.5 884 Q518 885 515.5 882.5 L513 878.5 Q511 876 507.5 876.5 Q504 877.3 503.3 880 Q503.5 874.5 507 871 Z" fill="url(#eg2)"/><path d="M503.3 880 Q505 875.5 510 876 Q514.5 877 515.5 882 Q517 886.5 522.5 886 Q525.5 885.5 526.8 883.5 Q525 889 519 891.3 Q511 893 506 887.5 Q503 884.5 503.3 880 Z" fill="#1560B8"/><ellipse cx="514.3" cy="880" rx="2.6" ry="2.3" fill="#02101D"/><path d="M527 883.2 Q524.5 885.2 521.5 885 Q524.5 884 526 882 Z" fill="#02101D"/><path d="M553 872.2 Q553 871 554.2 871 H560.5 L562.5 873 H573.5 Q574.5 873 574.5 874 V887.5 Q574.5 888.4 573.5 888.4 H554 Q553 888.4 553 887.5 Z" fill="#E8A400"/><path d="M553 874.5 H574.5 V887.5 Q574.5 888.4 573.5 888.4 H554 Q553 888.4 553 887.5 Z" fill="#FFD35C"/><path d="M556.7 888.4 V882.2 Q556.7 881 558 881 H569.5 Q570.8 881 570.8 882.2 V888.4 H567 V884.3 H560.5 V888.4 Z" fill="#4A9BE0"/></svg>
<div class="a" style="left:544px;top:898px;width:40px;height:2px;background:#7AB8EA"></div>
<svg class="i" style="left:601px;top:866px" width="23" height="25" viewBox="0 0 23 25"><path d="M7.5 7 V4.5 A4 4 0 0 1 15.5 4.5 V7" stroke="#FFFFFF" stroke-width="1.5" fill="none"/><rect x="0.5" y="7" width="22" height="17.5" rx="1.5" fill="#FFFFFF"/><rect x="6.5" y="11" width="4.5" height="4.5" fill="#F25022"/><rect x="12" y="11" width="4.5" height="4.5" fill="#7FBA00"/><rect x="6.5" y="16.5" width="4.5" height="4.5" fill="#00A4EF"/><rect x="12" y="16.5" width="4.5" height="4.5" fill="#FFB900"/></svg>
<svg class="i" style="left:649px;top:869px" width="26" height="21" viewBox="0 0 26 21"><path d="M0.7 6.5 L12.9 0.7 L25 6.5 V20 H0.7 Z" fill="#FFFFFF"/><path d="M1.5 7 H24.2 L14.5 11.3 L20 16.6 L6 9.7 Z" fill="#02101D"/></svg>
<svg class="i" style="left:690px;top:860px" width="42" height="40" viewBox="690 860 42 40"><path d="M710.90 874.10 L721.63 874.10 A12.2 12.2 0 0 0 700.51 873.50 L705.88 882.80 A5.8 5.8 0 0 1 710.90 874.10 Z" fill="#DB4437"/><path d="M715.92 882.80 L710.56 892.10 A12.2 12.2 0 0 0 721.63 874.10 L710.90 874.10 A5.8 5.8 0 0 1 715.92 882.80 Z" fill="#FBC02D"/><path d="M705.88 882.80 L700.51 873.50 A12.2 12.2 0 0 0 710.56 892.10 L715.92 882.80 A5.8 5.8 0 0 1 705.88 882.80 Z" fill="#1E9E50"/><circle cx="710.9" cy="879.9" r="5.8" fill="#FFFFFF"/><circle cx="710.9" cy="879.9" r="4.5" fill="#3B7FE6"/></svg>
<div class="a" style="left:691px;top:898px;width:31px;height:2px;background:#7AB8EA"></div>
<div class="a" style="left:723px;top:898px;width:8px;height:2px;background:#5E88AA"></div>
<svg class="i" style="left:750px;top:870px" width="20" height="20" viewBox="0 0 20 20"><path d="M16.69 7.93 L19.02 8.17 L19.02 11.83 L16.69 12.07 L16.19 13.27 L17.67 15.08 L15.08 17.67 L13.27 16.19 L12.07 16.69 L11.83 19.02 L8.17 19.02 L7.93 16.69 L6.73 16.19 L4.92 17.67 L2.33 15.08 L3.81 13.27 L3.31 12.07 L0.98 11.83 L0.98 8.17 L3.31 7.93 L3.81 6.73 L2.33 4.92 L4.92 2.33 L6.73 3.81 L7.93 3.31 L8.17 0.98 L11.83 0.98 L12.07 3.31 L13.27 3.81 L15.08 2.33 L17.67 4.92 L16.19 6.73 Z" fill="#FFFFFF"/><circle cx="10" cy="10" r="4.2" fill="#02101D"/></svg>
<div class="a" style="left:740px;top:898px;width:40px;height:2px;background:#7AB8EA"></div>
<div class="a" style="left:785px;top:860px;width:48px;height:40px;background:#33414B"></div>
<div class="a" style="left:785px;top:898px;width:48px;height:2px;background:#7AB8EA"></div>
<svg class="i" style="left:797px;top:868px" width="24" height="24" viewBox="0 0 24 24"><path d="M24.00 12.00 L23.90 13.57 L22.82 14.90 L22.35 16.29 L22.39 18.00 L21.52 19.31 L19.92 19.92 L18.82 20.89 L18.00 22.39 L16.59 23.09 L14.90 22.82 L13.46 23.10 L12.00 24.00 L10.43 23.90 L9.10 22.82 L7.71 22.35 L6.00 22.39 L4.69 21.52 L4.08 19.92 L3.11 18.82 L1.61 18.00 L0.91 16.59 L1.18 14.90 L0.90 13.46 L0.00 12.00 L0.10 10.43 L1.18 9.10 L1.65 7.71 L1.61 6.00 L2.48 4.69 L4.08 4.08 L5.18 3.11 L6.00 1.61 L7.41 0.91 L9.10 1.18 L10.54 0.90 L12.00 0.00 L13.57 0.10 L14.90 1.18 L16.29 1.65 L18.00 1.61 L19.31 2.48 L19.92 4.08 L20.89 5.18 L22.39 6.00 L23.09 7.41 L22.82 9.10 L23.10 10.54 Z" fill="#FFFFFF"/><path d="M12 6.5 L7.5 19 M12 6.5 L16.5 19 M5.2 12.3 Q9 16.5 12 16 Q15 16.5 17 14" stroke="#4285F4" stroke-width="2.2" fill="none" stroke-linecap="round"/><circle cx="12" cy="7" r="1.8" fill="#FFFFFF" stroke="#222" stroke-width="1"/><circle cx="12" cy="4.2" r="1" fill="#4285F4"/><path d="M15.8 10.8 L19 12 L15.8 14 Z" fill="#34A853"/></svg>
<svg class="i" style="left:1109px;top:869px" width="22" height="22" viewBox="0 0 22 22"><defs><radialGradient id="sun" cx="0.4" cy="0.4" r="0.7"><stop offset="0" stop-color="#FFC83D"/><stop offset="1" stop-color="#F78D1E"/></radialGradient></defs><circle cx="10.5" cy="11.5" r="10" fill="url(#sun)"/></svg>
<svg class="i" style="left:1120px;top:868px" width="12" height="12" viewBox="0 0 12 12"><circle cx="6" cy="6" r="5.8" fill="#C42B1C"/><path d="M6.5 2.8 V9.5 M4.8 4.2 L6.5 2.8" stroke="#FFFFFF" stroke-width="1.1" fill="none"/></svg>
<div class="t" style="left:1140px;top:874px;font-size:12.6px;color:#FFFFFF;font-weight:normal;">27°C</div>
<div class="t" style="left:1178px;top:874px;font-size:13.4px;color:#FFFFFF;font-weight:normal;">Sunny</div>
<svg class="i" style="left:1233px;top:875px" width="13" height="8" viewBox="0 0 13 8"><path d="M0.7 7.3 L6.5 1 L12.3 7.3" stroke="#FFFFFF" stroke-width="1.3" fill="none"/></svg>
<svg class="i" style="left:1255px;top:872px" width="17" height="16" viewBox="0 0 17 16"><g stroke="#FFFFFF" stroke-width="1.2" fill="none"><rect x="0.6" y="0.6" width="15.8" height="11.5"/><path d="M5 15 H11 M4 9 L10 3 M8 3 H10 V5"/></g><circle cx="13" cy="13" r="3" fill="#E81123"/></svg>
<svg class="i" style="left:1279px;top:872px" width="17" height="17" viewBox="0 0 17 17"><g stroke="#FFFFFF" stroke-width="1.1" fill="none"><circle cx="8" cy="8" r="7.4"/><ellipse cx="8" cy="8" rx="3.2" ry="7.4"/><path d="M0.6 8 H15.4 M1.8 4 H14.2 M1.8 12 H11"/></g><circle cx="13.5" cy="13.5" r="3.3" fill="#02101D" stroke="#FFFFFF" stroke-width="1.1"/><path d="M11.5 15.5 L15.5 11.5" stroke="#FFFFFF" stroke-width="1"/></svg>
<svg class="i" style="left:1303px;top:873px" width="17" height="14" viewBox="0 0 17 14"><g stroke="#FFFFFF" stroke-width="1.2" fill="none" stroke-linejoin="round"><path d="M0.6 4.5 H3.5 L7.5 0.8 V13.2 L3.5 9.5 H0.6 Z"/><path d="M10 4.5 Q11.5 7 10 9.5 M12.5 2.5 Q15 7 12.5 11.5 M14.8 1 Q18 7 14.8 13"/></g></svg>
<div class="t" style="left:1333px;top:863px;font-size:11.6px;color:#FFFFFF;font-weight:normal;">1:19 AM</div>
<div class="t" style="left:1327px;top:880px;font-size:11.6px;color:#FFFFFF;font-weight:normal;">11/10/2025</div>
<svg class="i" style="left:1398px;top:873px" width="17" height="15" viewBox="0 0 17 15"><path d="M0.6 0.6 H16.4 V10.5 H10.5 L8.5 13.5 L6.5 10.5 H0.6 Z" stroke="#FFFFFF" stroke-width="1.2" fill="none" stroke-linejoin="round"/></svg>
<div class="a" style="left:1435px;top:860px;width:1px;height:40px;background:#6B7682"></div>
</body></html>
